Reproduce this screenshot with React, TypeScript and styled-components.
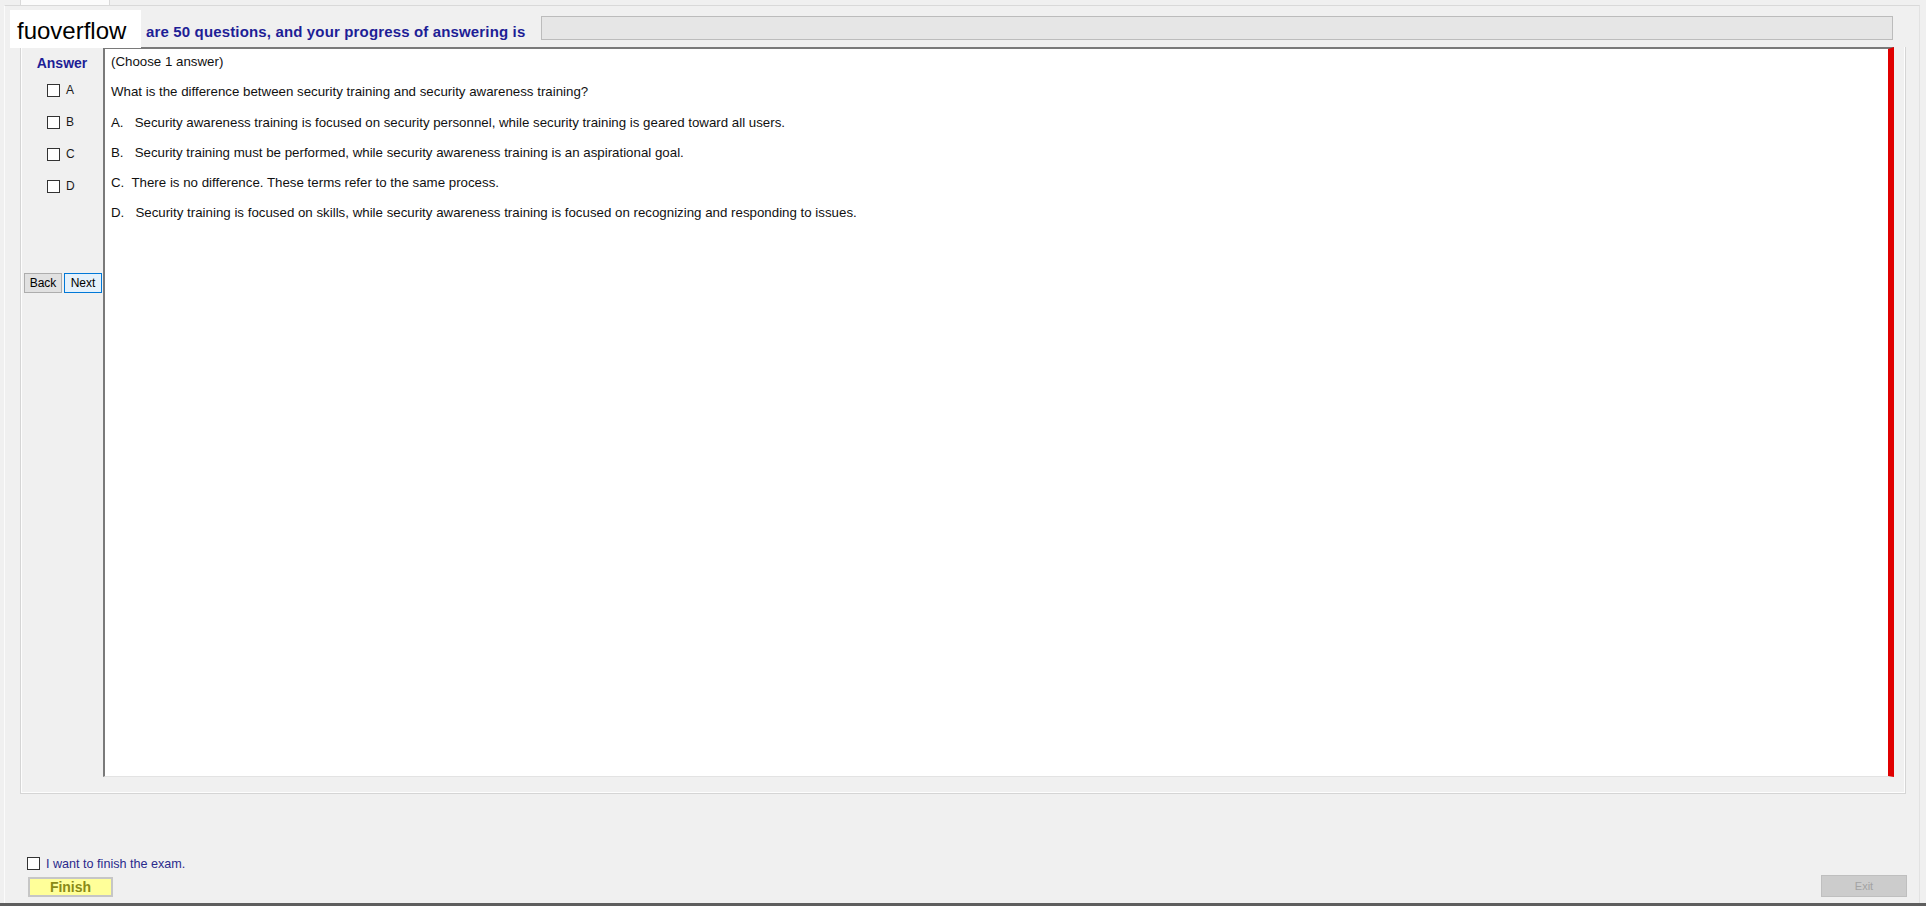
import React from "react";
import styled, { createGlobalStyle } from "styled-components";

const Global = createGlobalStyle`
  html, body { margin: 0; padding: 0; background: #f0f0f0; }
  body { font-family: "Liberation Sans", Arial, sans-serif; }
`;

const Window = styled.div`
  position: relative;
  width: 1926px;
  height: 906px;
  box-sizing: border-box;
  background: #f0f0f0;
  border-bottom: 3px solid #5e5e5e;
  display: flex;
  flex-direction: column;
  overflow: hidden;
`;

const TabStrip = styled.div`
  height: 5px;
  display: flex;
  padding-left: 20px;
`;

const Tab = styled.div`
  width: 88px;
  height: 5px;
  background: #fbfbfb;
  border-left: 1px solid #d9d9d9;
  border-right: 1px solid #d9d9d9;
`;

const TabPage = styled.div`
  flex: 1;
  margin: 0 6px 0 4px;
  border-top: 1px solid #d9d9d9;
  border-left: 1px solid #fbfbfb;
  border-right: 1px solid #e2e2e2;
  display: flex;
  flex-direction: column;
`;

const HeaderRow = styled.div`
  height: 41px;
  box-sizing: border-box;
  padding-top: 10px;
  display: flex;
  align-items: flex-start;
`;

const HeaderText = styled.div`
  margin: 7px 0 0 141px;
  font-size: 15px;
  line-height: 18px;
  font-weight: bold;
  letter-spacing: 0.15px;
  color: #1e1e96;
  white-space: nowrap;
`;

const Progress = styled.div`
  flex: 1;
  height: 24px;
  box-sizing: border-box;
  margin: 0 26px 0 16px;
  background: #e6e6e6;
  border: 1px solid #bcbcbc;
`;

const Watermark = styled.div`
  position: absolute;
  left: 10px;
  top: 10px;
  width: 131px;
  height: 38px;
  box-sizing: border-box;
  padding: 3px 0 0 7px;
  background: #ffffff;
  color: #000;
  font-size: 24px;
  line-height: 35px;
`;

const Group = styled.div`
  margin: 0 13px 0 15px;
  height: 747px;
  box-sizing: border-box;
  border: 1px solid #d5d5d5;
  border-top: none;
  box-shadow: inset 1px 0 0 #fdfdfd, inset 0 -1px 0 #fdfdfd, inset -1px 0 0 #fdfdfd;
  padding: 0 11px 16px 0;
  display: flex;
`;

const LeftPanel = styled.div`
  width: 82px;
  display: flex;
  flex-direction: column;
`;

const AnswerTitle = styled.div`
  margin-top: 7px;
  text-align: center;
  font-size: 14px;
  line-height: 18px;
  font-weight: bold;
  color: #1e1e96;
`;

const OptionList = styled.div`
  margin-top: 2px;
  display: flex;
  flex-direction: column;
`;

const OptionRow = styled.label`
  height: 32px;
  display: flex;
  align-items: center;
  padding-left: 26px;
  gap: 6px;
  font-size: 12px;
  color: #1a1a1a;
`;

const Box = styled.span`
  width: 13px;
  height: 13px;
  box-sizing: border-box;
  background: #ffffff;
  border: 1px solid #333333;
  display: inline-block;
`;

const NavRow = styled.div`
  margin-top: 71px;
  padding-left: 3px;
  display: flex;
  gap: 2px;
`;

const NavButton = styled.button<{ $focused?: boolean }>`
  width: 38px;
  height: 20px;
  padding: 0;
  box-sizing: border-box;
  font-family: "Liberation Sans", Arial, sans-serif;
  font-size: 12px;
  color: #000;
  background: ${(p) => (p.$focused ? "#e5f1fb" : "#e1e1e1")};
  border: 1px solid ${(p) => (p.$focused ? "#0078d7" : "#adadad")};
`;

const ContentBox = styled.div`
  flex: 1;
  background: #ffffff;
  border-top: 2px solid #7a7a7a;
  border-left: 2px solid #7a7a7a;
  border-bottom: 1px solid #e3e3e3;
  border-right: 6px solid #e00000;
  padding: 5px 0 0 6px;
  display: flex;
  flex-direction: column;
  gap: 14.3px;
`;

const Line = styled.div`
  font-size: 13.3px;
  line-height: 16px;
  color: #111;
  white-space: pre;
`;

const Bottom = styled.div`
  flex: 1;
  display: flex;
  flex-direction: column;
  padding: 63px 12px 6px 22px;
`;

const FinishCheck = styled.label`
  display: flex;
  align-items: center;
  gap: 6px;
  height: 13px;
  font-size: 12.6px;
  color: #2a2a8c;
`;

const ActionRow = styled.div`
  margin-top: 5px;
  display: flex;
  align-items: flex-end;
  justify-content: space-between;
`;

const FinishButton = styled.button`
  margin-left: 1px;
  width: 85px;
  height: 20px;
  padding: 0;
  box-sizing: border-box;
  background: #ffff99;
  border: 2px solid #c6c6c6;
  font-family: "Liberation Sans", Arial, sans-serif;
  font-size: 14px;
  font-weight: bold;
  color: #8a8a16;
`;

const ExitButton = styled.button`
  width: 86px;
  height: 22px;
  padding: 0;
  box-sizing: border-box;
  background: #cccccc;
  border: 1px solid #bfbfbf;
  font-family: "Liberation Sans", Arial, sans-serif;
  font-size: 11px;
  color: #a3a3a3;
`;

const options = ["A", "B", "C", "D"];

const lines = [
  "(Choose 1 answer)",
  "What is the difference between security training and security awareness training?",
  "A.   Security awareness training is focused on security personnel, while security training is geared toward all users.",
  "B.   Security training must be performed, while security awareness training is an aspirational goal.",
  "C.  There is no difference. These terms refer to the same process.",
  "D.   Security training is focused on skills, while security awareness training is focused on recognizing and responding to issues.",
];

export default function App() {
  return (
    <>
      <Global />
      <Window>
        <TabStrip>
          <Tab />
        </TabStrip>
        <TabPage>
          <HeaderRow>
            <HeaderText>are 50 questions, and your progress of answering is</HeaderText>
            <Progress />
          </HeaderRow>
          <Group>
            <LeftPanel>
              <AnswerTitle>Answer</AnswerTitle>
              <OptionList>
                {options.map((o) => (
                  <OptionRow key={o}>
                    <Box />
                    {o}
                  </OptionRow>
                ))}
              </OptionList>
              <NavRow>
                <NavButton>Back</NavButton>
                <NavButton $focused>Next</NavButton>
              </NavRow>
            </LeftPanel>
            <ContentBox>
              {lines.map((l, i) => (
                <Line key={i}>{l}</Line>
              ))}
            </ContentBox>
          </Group>
          <Bottom>
            <FinishCheck>
              <Box />
              I want to finish the exam.
            </FinishCheck>
            <ActionRow>
              <FinishButton>Finish</FinishButton>
              <ExitButton>Exit</ExitButton>
            </ActionRow>
          </Bottom>
        </TabPage>
        <Watermark>fuoverflow</Watermark>
      </Window>
    </>
  );
}
